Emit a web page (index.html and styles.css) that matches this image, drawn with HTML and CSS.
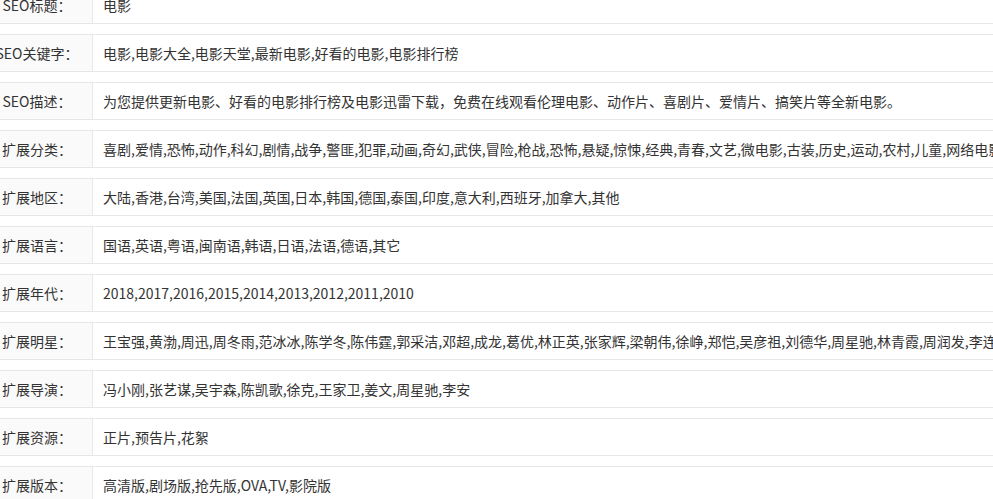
FILE: index.html
```html
<!DOCTYPE html>
<html lang="zh-CN">
<head>
<meta charset="utf-8">
<title>SEO设置</title>
<link rel="stylesheet" href="styles.css">
</head>
<body>
<div class="form">
  <div class="row"><div class="label">SEO标题：</div><div class="value">电影</div></div>
  <div class="row"><div class="label">SEO关键字：</div><div class="value">电影,电影大全,电影天堂,最新电影,好看的电影,电影排行榜</div></div>
  <div class="row"><div class="label">SEO描述：</div><div class="value">为您提供更新电影、好看的电影排行榜及电影迅雷下载，免费在线观看伦理电影、动作片、喜剧片、爱情片、搞笑片等全新电影。</div></div>
  <div class="row"><div class="label">扩展分类：</div><div class="value">喜剧,爱情,恐怖,动作,科幻,剧情,战争,警匪,犯罪,动画,奇幻,武侠,冒险,枪战,恐怖,悬疑,惊悚,经典,青春,文艺,微电影,古装,历史,运动,农村,儿童,网络电影</div></div>
  <div class="row"><div class="label">扩展地区：</div><div class="value">大陆,香港,台湾,美国,法国,英国,日本,韩国,德国,泰国,印度,意大利,西班牙,加拿大,其他</div></div>
  <div class="row"><div class="label">扩展语言：</div><div class="value">国语,英语,粤语,闽南语,韩语,日语,法语,德语,其它</div></div>
  <div class="row"><div class="label">扩展年代：</div><div class="value">2018,2017,2016,2015,2014,2013,2012,2011,2010</div></div>
  <div class="row"><div class="label">扩展明星：</div><div class="value">王宝强,黄渤,周迅,周冬雨,范冰冰,陈学冬,陈伟霆,郭采洁,邓超,成龙,葛优,林正英,张家辉,梁朝伟,徐峥,郑恺,吴彦祖,刘德华,周星驰,林青霞,周润发,李连杰,甄子丹,刘亦菲,舒淇</div></div>
  <div class="row"><div class="label">扩展导演：</div><div class="value">冯小刚,张艺谋,吴宇森,陈凯歌,徐克,王家卫,姜文,周星驰,李安</div></div>
  <div class="row"><div class="label">扩展资源：</div><div class="value">正片,预告片,花絮</div></div>
  <div class="row"><div class="label">扩展版本：</div><div class="value">高清版,剧场版,抢先版,OVA,TV,影院版</div></div>
</div>
</body>
</html>
```
FILE: styles.css
```css
html, body {
  margin: 0;
  padding: 0;
  background: #fff;
  overflow: hidden;
}
body {
  font-family: "Microsoft YaHei", "Noto Sans CJK SC", sans-serif;
  font-size: 14px;
  color: #333;
}
.form {
  display: flex;
  flex-direction: column;
  gap: 10px;
  margin-top: -14px;
  margin-left: -18px;
  width: 1400px;
}
.row {
  display: flex;
  height: 36px;
  border-top: 1px solid #e6e6e6;
  border-bottom: 1px solid #e6e6e6;
  white-space: nowrap;
}
.label {
  width: 110px;
  flex: none;
  background: #fafafa;
  border-right: 1px solid #e9e9e9;
  display: flex;
  align-items: center;
  justify-content: center;
}
.value {
  padding-left: 10px;
  display: flex;
  align-items: center;
}
.value, .label {
  letter-spacing: 0;
}
```
